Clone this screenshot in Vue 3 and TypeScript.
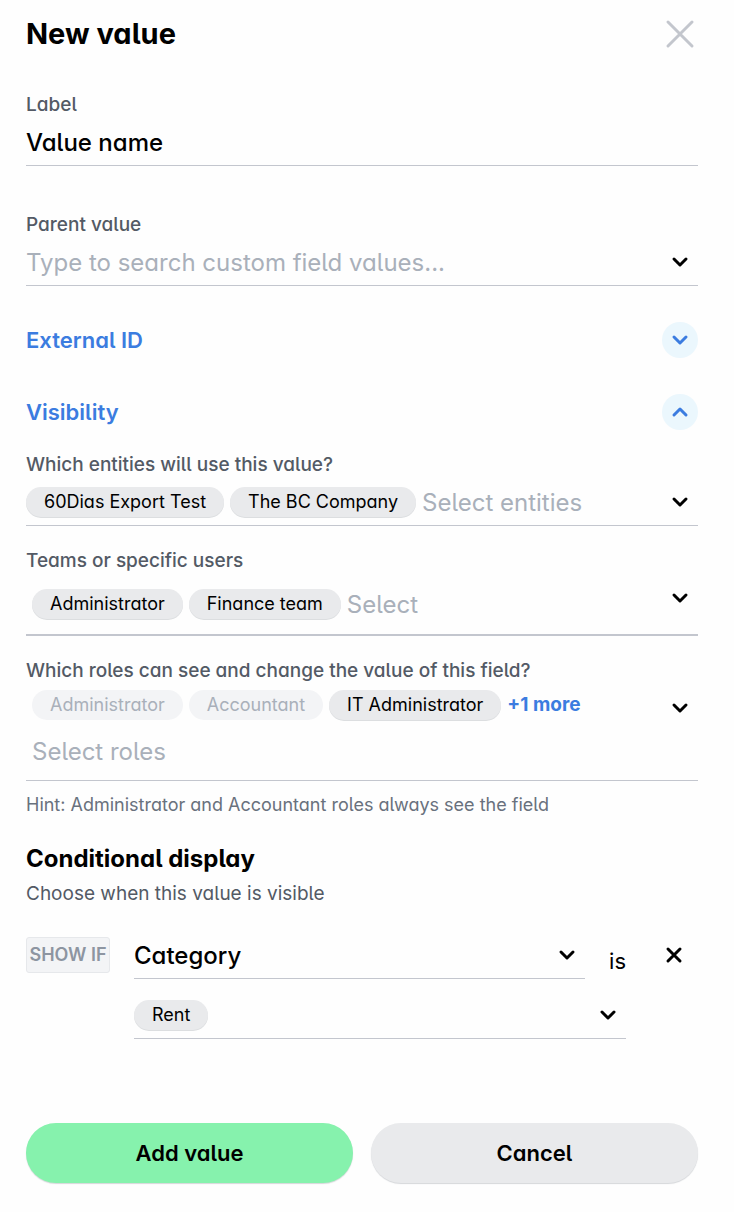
<script setup lang="ts">
import { ref } from 'vue'

interface Chip {
  name: string
  locked?: boolean
}

const label = ref('Value name')
const parent = ref('')
const externalOpen = ref(false)
const visibilityOpen = ref(true)
const category = ref('Category')

const entities = ref<Chip[]>([{ name: '60Dias Export Test' }, { name: 'The BC Company' }])
const teams = ref<Chip[]>([{ name: 'Administrator' }, { name: 'Finance team' }])
const roles = ref<Chip[]>([
  { name: 'Administrator', locked: true },
  { name: 'Accountant', locked: true },
  { name: 'IT Administrator' },
])
const rents = ref<Chip[]>([{ name: 'Rent' }])
</script>

<template>
  <form class="panel" @submit.prevent>
    <header class="header">
      <h1 class="title">New value</h1>
      <button type="button" class="icon-button close" aria-label="Close">
        <svg width="36" height="36" viewBox="0 0 36 36"><path d="M6 6 30 30M30 6 6 30" /></svg>
      </button>
    </header>

    <div class="field">
      <label class="label" for="label">Label</label>
      <div class="control">
        <input id="label" v-model="label" class="input" type="text" />
      </div>
    </div>

    <div class="field parent-field">
      <label class="label" for="parent">Parent value</label>
      <div class="control">
        <input id="parent" v-model="parent" class="input" type="text" placeholder="Type to search custom field values..." />
        <button type="button" class="icon-button" aria-label="Show values">
          <svg width="36" height="36" viewBox="0 0 36 36"><path d="m12 15 6 6 6-6" /></svg>
        </button>
      </div>
    </div>

    <section class="section-row">
      <h2 class="section-title">External ID</h2>
      <button type="button" class="icon-button round" aria-label="Toggle External ID" :aria-expanded="externalOpen" @click="externalOpen = !externalOpen">
        <svg width="36" height="36" viewBox="0 0 36 36"><path :d="externalOpen ? 'm12 21 6-6 6 6' : 'm12 15 6 6 6-6'" /></svg>
      </button>
    </section>

    <section class="section-row">
      <h2 class="section-title">Visibility</h2>
      <button type="button" class="icon-button round" aria-label="Toggle Visibility" :aria-expanded="visibilityOpen" @click="visibilityOpen = !visibilityOpen">
        <svg width="36" height="36" viewBox="0 0 36 36"><path :d="visibilityOpen ? 'm12 21 6-6 6 6' : 'm12 15 6 6 6-6'" /></svg>
      </button>
    </section>

    <div v-if="visibilityOpen" class="visibility">
      <div class="field">
        <label class="label" for="entities">Which entities will use this value?</label>
        <div class="control">
          <div class="chips">
            <span v-for="c in entities" :key="c.name" class="chip">{{ c.name }}</span>
            <input id="entities" class="input" type="text" placeholder="Select entities" />
          </div>
          <button type="button" class="icon-button" aria-label="Show entities">
            <svg width="36" height="36" viewBox="0 0 36 36"><path d="m12 15 6 6 6-6" /></svg>
          </button>
        </div>
      </div>

      <div class="field">
        <label class="label" for="teams">Teams or specific users</label>
        <div class="control teams">
          <div class="chips">
            <span v-for="c in teams" :key="c.name" class="chip">{{ c.name }}</span>
            <input id="teams" class="input" type="text" placeholder="Select" />
          </div>
          <button type="button" class="icon-button" aria-label="Show teams and users">
            <svg width="36" height="36" viewBox="0 0 36 36"><path d="m12 15 6 6 6-6" /></svg>
          </button>
        </div>
      </div>

      <div class="field">
        <label class="label" for="roles">Which roles can see and change the value of this field?</label>
        <div class="control roles">
          <div class="roles-body">
            <div class="chips">
              <span v-for="c in roles" :key="c.name" class="chip" :class="{ locked: c.locked }">{{ c.name }}</span>
              <button type="button" class="more">+1 more</button>
            </div>
            <input id="roles" class="input" type="text" placeholder="Select roles" aria-describedby="roles-hint" />
          </div>
          <button type="button" class="icon-button" aria-label="Show roles">
            <svg width="36" height="36" viewBox="0 0 36 36"><path d="m12 15 6 6 6-6" /></svg>
          </button>
        </div>
        <p id="roles-hint" class="hint">Hint: Administrator and Accountant roles always see the field</p>
      </div>
    </div>

    <h2 class="subtitle">Conditional display</h2>
    <p class="description">Choose when this value is visible</p>

    <div class="condition">
      <span class="tag">SHOW IF</span>
      <div class="condition-body">
        <div class="condition-row">
          <div class="control select-control">
            <select v-model="category" class="input select" aria-label="Condition field">
              <option>Category</option>
            </select>
            <svg class="select-arrow" width="36" height="36" viewBox="0 0 36 36"><path d="m12 15 6 6 6-6" /></svg>
          </div>
          <span class="operator">is</span>
        </div>
        <div class="control">
          <div class="chips">
            <span v-for="c in rents" :key="c.name" class="chip">{{ c.name }}</span>
            <input class="input" type="text" aria-label="Condition values" />
          </div>
          <button type="button" class="icon-button" aria-label="Show condition values">
            <svg width="36" height="36" viewBox="0 0 36 36"><path d="m12 15 6 6 6-6" /></svg>
          </button>
        </div>
      </div>
      <button type="button" class="icon-button remove" aria-label="Remove condition">
        <svg width="36" height="36" viewBox="0 0 36 36"><path d="m12 12 12 12M24 12 12 24" /></svg>
      </button>
    </div>

    <footer class="actions">
      <button type="submit" class="action primary">Add value</button>
      <button type="button" class="action">Cancel</button>
    </footer>
  </form>
</template>

<style>
body {
  background: #fefefe;
}
</style>

<style scoped>
.panel,
.panel * {
  box-sizing: border-box;
}

.panel {
  padding: 0 36px 28px 26px;
  font-family: Inter, "Liberation Sans", sans-serif;
  font-feature-settings: "cv11", "cv05";
  color: #000;
}

button,
input,
select {
  margin: 0;
  padding: 0;
  border: 0;
  background: none;
  font: inherit;
  font-feature-settings: inherit;
  color: inherit;
}

button {
  cursor: pointer;
}

h1,
h2,
p {
  margin: 0;
}

svg {
  display: block;
  fill: none;
  stroke: currentColor;
  stroke-width: 3;
  stroke-linecap: round;
  stroke-linejoin: round;
}

.header,
.section-row {
  display: flex;
  align-items: center;
  justify-content: space-between;
}

.header {
  height: 68px;
  margin-bottom: 25px;
}

.title {
  font-size: 29px;
  font-weight: 700;
  line-height: 36px;
}

.icon-button {
  flex: none;
  width: 36px;
  height: 36px;
}

.close {
  color: #c3c6cd;
}

.round {
  border-radius: 50%;
  background: #ebf7fd;
  color: #3b7ce0;
}

.label {
  display: block;
  font-size: 19px;
  font-weight: 500;
  line-height: 24px;
  color: #535a65;
}

.control {
  display: flex;
  align-items: center;
  min-height: 49px;
  padding-top: 2px;
  border-bottom: 1px solid #c3c6ce;
}

.input {
  flex: 1;
  width: 100%;
  min-width: 0;
  height: 32px;
  font-size: 24px;
  font-weight: 450;
  outline: none;
}

.input::placeholder {
  color: #a9b0ba;
  font-weight: 400;
  opacity: 1;
}

.parent-field {
  margin-top: 47px;
}

.section-row {
  margin-top: 36px;
}

.section-title {
  font-size: 22px;
  font-weight: 600;
  color: #3b7ce0;
}

.visibility {
  display: flex;
  flex-direction: column;
  gap: 23px;
  margin-top: 23px;
}

.chips {
  display: flex;
  flex: 1;
  align-items: center;
  gap: 6px;
  min-width: 0;
}

.chip {
  flex: none;
  padding: 0 18px;
  border-radius: 15px;
  background: #e9eaec;
  box-shadow: 0 1px 0 #dcdee0;
  font-size: 18px;
  line-height: 30px;
}

.chip.locked {
  background: #f3f4f6;
  box-shadow: none;
  color: #a9b0ba;
}

.teams {
  align-items: flex-start;
  min-height: 63px;
  padding: 7px 0 0 6px;
  border-bottom-width: 2px;
}

.teams .chips {
  padding-top: 8px;
}

.roles {
  align-items: flex-start;
  padding: 7px 0 13px 6px;
}

.roles-body {
  display: flex;
  flex: 1;
  flex-direction: column;
  gap: 15px;
  min-width: 0;
}

.roles-body > .input {
  flex: none;
}

.more {
  font-size: 19px;
  font-weight: 700;
  line-height: 24px;
  color: #3b7ce0;
}

.hint {
  margin-top: 12px;
  font-size: 18px;
  line-height: 24px;
  color: #69717d;
}

.subtitle {
  margin-top: 26px;
  font-size: 24px;
  font-weight: 700;
  line-height: 32px;
}

.description {
  margin-top: 7px;
  font-size: 19px;
  line-height: 24px;
  color: #535a65;
}

.condition {
  display: grid;
  grid-template-columns: 84px minmax(0, 1fr) 36px;
  margin-top: 24px;
  padding-right: 6px;
}

.tag {
  height: 36px;
  margin-top: 7px;
  border: 1px solid #e6e8eb;
  border-radius: 3px;
  background: #f3f4f6;
  font-size: 18px;
  font-weight: 600;
  line-height: 34px;
  text-align: center;
  white-space: nowrap;
  color: #8d95a1;
}

.condition-body {
  display: flex;
  flex-direction: column;
  gap: 11px;
  margin: 0 30px 0 24px;
}

.condition-row {
  display: flex;
  align-items: center;
  gap: 24px;
}

.select-control {
  position: relative;
  flex: 1;
}

.select {
  height: 46px;
  appearance: none;
}

.select-arrow {
  position: absolute;
  right: 0;
  pointer-events: none;
}

.operator {
  padding-top: 12px;
  font-size: 22px;
}

.remove {
  margin-top: 7px;
}

.actions {
  display: grid;
  grid-template-columns: 1fr 1fr;
  gap: 18px;
  margin-top: 84px;
}

.action {
  height: 60px;
  border-radius: 30px;
  background: #e9eaec;
  box-shadow: 0 1px 1px #d5d7da;
  font-size: 22px;
  font-weight: 600;
}

.primary {
  background: #86f2ad;
}
</style>
